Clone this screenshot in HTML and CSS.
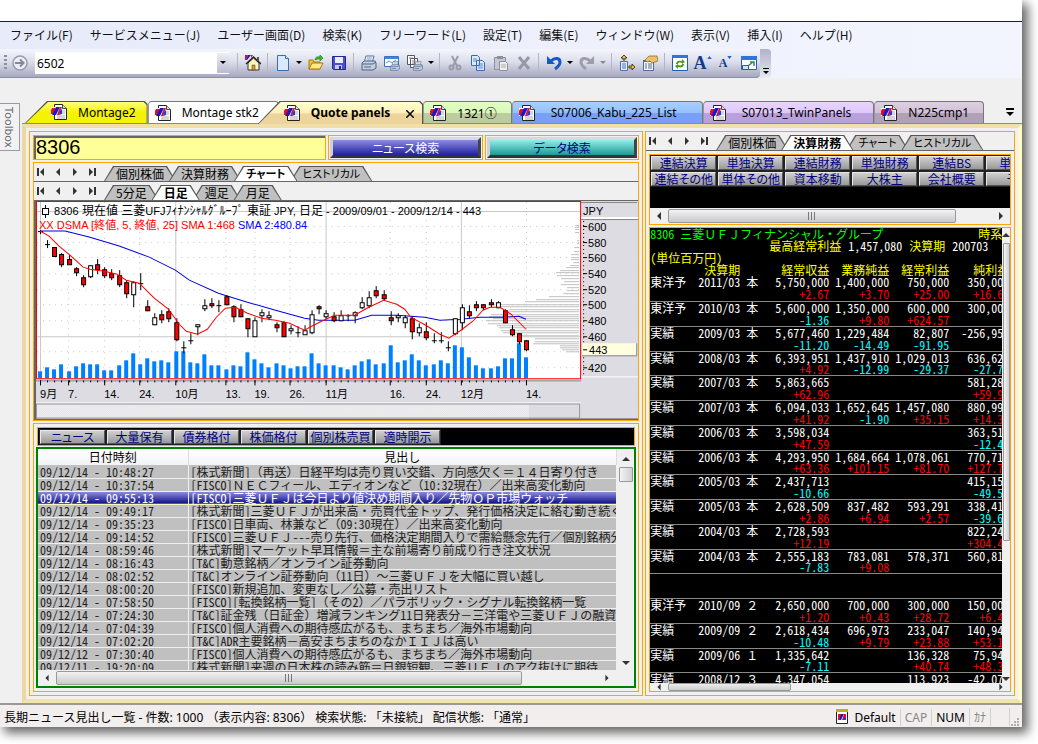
FILE: index.html
```html
<!DOCTYPE html>
<html lang="ja">
<head>
    <meta charset="UTF-8">
    <meta name="viewport" content="width=device-width, initial-scale=1.0">
    <title>Quote panels</title>
    <link rel="stylesheet" href="styles.css">
</head>
<body>
    <!-- shared icons -->
    <svg class="defs" aria-hidden="true">
        <symbol id="doc" viewBox="0 0 16 16">
            <path d="M3.5 .5h8l4 4v11h-12z" fill="#fff" stroke="#222"/>
            <path d="M11.500 .5v4h4" fill="#ddd" stroke="#444"/>
            <path d="M9 7h5M9 9h5M6 12h8M6 14h8" stroke="#aaa"/>
            <path d="M0 3h11v8H0z" fill="#fff"/>
            <path d="M1 4h4L2 10H0V6z" fill="#e01020"/>
            <path d="M5 3h4L5 11H1z" fill="#1818c8"/>
            <path d="M9 3h2L8 11H6z" fill="#e01020"/>
            <path d="M9 7l2-2v5l-3 1z" fill="#2838e0"/>
        </symbol>
        <symbol id="first" viewBox="0 0 10 10"><path d="M1 1h2v8H1zM8 1v8L4 5z" fill="#333"/></symbol>
        <symbol id="prev" viewBox="0 0 10 10"><path d="M7 1v8L3 5z" fill="#333"/></symbol>
        <symbol id="next" viewBox="0 0 10 10"><path d="M3 1v8l4-4z" fill="#333"/></symbol>
        <symbol id="last" viewBox="0 0 10 10"><path d="M7 1h2v8H7zM2 1v8l4-4z" fill="#333"/></symbol>
        <symbol id="caret" viewBox="0 0 6 4"><path d="M0 0h6L3 3z" fill="currentColor"/></symbol>
        <symbol id="printer" viewBox="0 0 16 16">
            <path d="M5 1h8l-2 7H3z" fill="#fff" stroke="#556c94"/>
            <path d="M6 3h5M5.500 5h5" stroke="#7a90b8"/>
            <path d="M1 8l2-2h11l1 2v5l-3 2H1z" fill="#c4cfe0" stroke="#4d6389"/>
            <path d="M1 9h11l3-2M3 12h7" stroke="#4d6389" fill="none"/>
        </symbol>
    </svg>

    <div class="window">
        <nav class="menu">
            <a href="#">ファイル(F)</a>
            <a href="#">サービスメニュー(J)</a>
            <a href="#">ユーザー画面(D)</a>
            <a href="#">検索(K)</a>
            <a href="#">フリーワード(L)</a>
            <a href="#">設定(T)</a>
            <a href="#">編集(E)</a>
            <a href="#">ウィンドウ(W)</a>
            <a href="#">表示(V)</a>
            <a href="#">挿入(I)</a>
            <a href="#">ヘルプ(H)</a>
        </nav>

        <div class="toolbar-row">
            <div class="toolbar">
                <span class="grip"></span>
                <button class="go" aria-label="移動"><svg width="16" height="16" viewBox="0 0 16 16"><circle cx="8" cy="8" r="7" fill="#eceef6" stroke="#9a9cae" stroke-width="1.500"/><path d="M3 8h8M8 4.500L11.500 8 8 11.500" fill="none" stroke="#85879a" stroke-width="2"/></svg></button>
                <div class="combo">
                    <input type="text" value="6502" aria-label="コード">
                    <button aria-label="一覧"><svg width="6" height="4"><use href="#caret"/></svg></button>
                </div>
                <span class="sep"></span>
                <button class="tool" aria-label="ホーム"><svg width="16" height="16" viewBox="0 0 16 16"><path d="M3 8v7h11V8L8.500 3z" fill="#fff3c0" stroke="#333"/><path d="M1 9l7.500-7L16 9" fill="none" stroke="#222" stroke-width="1.500"/><path d="M12 2h2v4h-2z" fill="#555"/><path d="M7 10h3v5H7z" fill="#d8a018" stroke="#333" stroke-width=".5"/><path d="M0 0h3L1 5H0z" fill="#e01020"/><path d="M3 0h3L2 5H1z" fill="#1818c8"/><path d="M6 0h2L6 3z" fill="#e01020"/></svg></button>
                <span class="sep"></span>
                <button class="tool" aria-label="新規"><svg width="16" height="16" viewBox="0 0 16 16"><path d="M2.500 .5h8l3 3v12h-11z" fill="#d9e9ff" stroke="#3d6cb5"/><path d="M10.500 .5v3h3" fill="#fff" stroke="#3d6cb5"/></svg></button>
                <button class="drop" aria-label="新規一覧"><svg width="6" height="4"><use href="#caret"/></svg></button>
                <button class="tool" aria-label="開く"><svg width="16" height="16" viewBox="0 0 16 16"><path d="M1 14V5h4l1 2h6v7z" fill="#f0c040" stroke="#a97a10"/><path d="M1 14l3-6h11l-3 6z" fill="#ffe88a" stroke="#a97a10"/><path d="M7 5c0-3 3-4 5-3V0l3 3-3 3V4c-2 0-3 0-5 1z" fill="#35b835" stroke="#187818" stroke-width=".6"/></svg></button>
                <button class="tool" aria-label="保存"><svg width="16" height="16" viewBox="0 0 16 16"><path d="M1.500 1.500h13v13h-12l-1-1z" fill="#4a4fd0" stroke="#23278f"/><path d="M4 2h8v6H4z" fill="#e8eeff"/><path d="M4 10h7v4H4z" fill="#c5cbe8"/><path d="M8 11h2v3H8z" fill="#23278f"/></svg></button>
                <span class="sep"></span>
                <button class="tool" aria-label="印刷"><svg width="16" height="16"><use href="#printer"/></svg></button>
                <button class="tool" aria-label="印刷プレビュー"><svg width="16" height="16" viewBox="0 0 16 16"><path d="M.5 1.500h14v10H.5z" fill="#fff" stroke="#3c70c0"/><path d="M1 2h13v2H1z" fill="#4384df"/><path d="M2 8l3-2 3 2 4-3" fill="none" stroke="#6990c4"/><use href="#printer" x="6" y="6" width="10" height="10"/></svg></button>
                <button class="tool" aria-label="まとめて印刷"><svg width="16" height="16" viewBox="0 0 16 16"><path d="M.5 .5h7v9h-7zM3.500 3.500h7v9h-7z" fill="#fff" stroke="#556"/><path d="M2 3h4M5 6h4M5 8h4" stroke="#888"/><use href="#printer" x="6" y="6" width="10" height="10"/></svg></button>
                <button class="drop" aria-label="印刷一覧"><svg width="6" height="4"><use href="#caret"/></svg></button>
                <span class="sep"></span>
                <button class="tool" aria-label="切り取り" disabled><svg width="16" height="16" viewBox="0 0 16 16" fill="none" stroke="#9a9caa" stroke-width="2"><path d="M5 1l5 10M11 1L6 11"/><circle cx="4.500" cy="12.500" r="2"/><circle cx="11.500" cy="12.500" r="2"/></svg></button>
                <button class="tool" aria-label="コピー"><svg width="16" height="16" viewBox="0 0 16 16"><path d="M1.500 .5h6l2 2v8h-8zM6.500 5.500h6l2 2v8h-8z" fill="#dceaff" stroke="#3a69b8"/><path d="M3 4h4M3 6h3M8 9h5M8 11h5M8 13h5" stroke="#5d8ad0"/></svg></button>
                <button class="tool" aria-label="貼り付け" disabled><svg width="16" height="16" viewBox="0 0 16 16"><path d="M1.500 2.500h11v12h-11z" fill="#c4c6d0" stroke="#8e90a0"/><path d="M4 1h6v3H4z" fill="#8e90a0"/><path d="M6.500 6.500h6l2 2v7h-8z" fill="#eee" stroke="#8e90a0"/><path d="M8 10h5M8 12h5" stroke="#aaa"/></svg></button>
                <button class="tool" aria-label="削除" disabled><svg width="16" height="16" viewBox="0 0 16 16"><path d="M3 2l10 12M13 2L3 14" stroke="#9698a8" stroke-width="3"/></svg></button>
                <span class="sep"></span>
                <button class="tool" aria-label="元に戻す"><svg width="16" height="16" viewBox="0 0 16 16"><path d="M1 1v8h8z" fill="#1857c8"/><path d="M5 6c4-4 9-3 9 1 0 3-2 5-5 7" fill="none" stroke="#1857c8" stroke-width="3"/></svg></button>
                <button class="drop" aria-label="元に戻す一覧"><svg width="6" height="4"><use href="#caret"/></svg></button>
                <button class="tool" aria-label="やり直し" disabled><svg width="16" height="16" viewBox="0 0 16 16"><path d="M15 1v8H7z" fill="#9c9eac"/><path d="M11 6C7 2 2 3 2 7c0 3 2 5 5 7" fill="none" stroke="#9c9eac" stroke-width="3"/></svg></button>
                <button class="drop" aria-label="やり直し一覧" disabled><svg width="6" height="4"><use href="#caret"/></svg></button>
                <span class="sep"></span>
                <button class="tool" aria-label="並べ替え"><svg width="16" height="16" viewBox="0 0 16 16"><path d="M1.500 6.500h7v9h-7z" fill="#e8f0ff" stroke="#4a6fb0"/><path d="M3 9h4M3 11h4M3 13h4" stroke="#4a6fb0"/><path d="M5 0l3 3H6v2H4V3H2zM16 12l-3-3v2h-3v2h3v2z" fill="#f4c020" stroke="#222" stroke-width=".8"/></svg></button>
                <button class="tool" aria-label="プロパティ"><svg width="16" height="16" viewBox="0 0 16 16"><path d="M1.500 5.500h10v10h-10z" fill="#f5f8ff" stroke="#506b98"/><path d="M1 5h11v2H1z" fill="#506b98"/><path d="M3 9h2M6 9h4M3 11h2M6 11h4M3 13h2M6 13h4" stroke="#506b98"/><path d="M3 5l4-4 8 0 1 5-6 2-2-2-3 1z" fill="#eac170" stroke="#8b6418" stroke-width=".7"/></svg></button>
                <span class="sep"></span>
                <button class="tool" aria-label="更新"><svg width="16" height="16" viewBox="0 0 16 16"><path d="M.5 .5h15v15H.5z" fill="#fff" stroke="#1c60b8"/><path d="M0 0h16v3H0z" fill="#2b76d8"/><path d="M4 9c0-3 3-4 6-3V4l3 3-3 2V8c-3-1-4 0-4 1zM12 9c0 3-3 4-6 3v2l-3-3 3-2v1c3 1 4 0 4-1z" fill="#4b9a20"/></svg></button>
                <button class="tool letter big" aria-label="文字を拡大">A<svg width="5" height="3" viewBox="0 0 6 4"><path d="M0 4l3-4 3 4z" fill="#1c66d8"/></svg></button>
                <button class="tool letter small" aria-label="文字を縮小">A<svg width="5" height="3" viewBox="0 0 6 4"><path d="M0 0h6L3 4z" fill="#1c66d8"/></svg></button>
                <button class="tool" aria-label="全画面"><svg width="16" height="16" viewBox="0 0 16 16"><path d="M.5 1.500h15v13H.5z" fill="#fff" stroke="#1c60b8"/><path d="M0 1h16v4H0z" fill="#2b76d8"/><path d="M1.500 10.500h6v4h-6z" fill="#cfe3ff" stroke="#1c60b8"/><path d="M7 11l5-4M9 7h4v4" fill="none" stroke="#289058" stroke-width="1.500"/></svg></button>
            </div>
            <button class="overflow" aria-label="その他"><svg width="6" height="7" viewBox="0 0 6 7"><path d="M0 0h6v1H0zM0 3h6L3 6z" fill="#000"/></svg></button>
        </div>

        <div class="work">
            <aside class="side"><button class="toolbox">Toolbox</button></aside>

            <main class="docs">
                <div class="doc-tabs">
                    <button class="doc-tab slant yellow"><svg width="16" height="16"><use href="#doc"/></svg><span>Montage2</span></button>
                    <button class="doc-tab white"><svg width="16" height="16"><use href="#doc"/></svg><span>Montage stk2</span></button>
                    <button class="doc-tab slant active"><svg width="16" height="16"><use href="#doc"/></svg><span>Quote panels</span><svg class="close" width="8" height="8" viewBox="0 0 8 8"><path d="M0 0l8 8M8 0L0 8" stroke="#000" stroke-width="1.500"/></svg></button>
                    <button class="doc-tab green"><svg width="16" height="16"><use href="#doc"/></svg><span>1321①</span></button>
                    <button class="doc-tab blue"><svg width="16" height="16"><use href="#doc"/></svg><span>S07006_Kabu_225_List</span></button>
                    <button class="doc-tab violet"><svg width="16" height="16"><use href="#doc"/></svg><span>S07013_TwinPanels</span></button>
                    <button class="doc-tab mauve"><svg width="16" height="16"><use href="#doc"/></svg><span>N225cmp1</span></button>
                    <button class="more" aria-label="タブ一覧"><svg width="8" height="8" viewBox="0 0 8 8"><path d="M0 0h8v2H0zM0 4h8L4 8z" fill="#000"/></svg></button>
                </div>

                <div class="frame">
                    <section class="pane left">
                        <div class="search">
                            <input class="code" type="text" value="8306" aria-label="銘柄コード">
                            <div class="search-cell"><button class="bevel news-search">ニュース検索</button></div>
                            <div class="search-cell"><button class="bevel data-search">データ検索</button></div>
                        </div>

                        <div class="box">
                            <div class="sheet-row">
                                <div class="pager">
                                    <button aria-label="先頭"><svg width="10" height="10"><use href="#first"/></svg></button>
                                    <button aria-label="前へ"><svg width="10" height="10"><use href="#prev"/></svg></button>
                                    <button aria-label="次へ"><svg width="10" height="10"><use href="#next"/></svg></button>
                                    <button aria-label="末尾"><svg width="10" height="10"><use href="#last"/></svg></button>
                                </div>
                                <button class="sheet">個別株価</button>
                                <button class="sheet">決算財務</button>
                                <button class="sheet kana on">チャート</button>
                                <button class="sheet kana">ヒストリカル</button>
                            </div>
                            <div class="sheet-row">
                                <div class="pager">
                                    <button aria-label="先頭"><svg width="10" height="10"><use href="#first"/></svg></button>
                                    <button aria-label="前へ"><svg width="10" height="10"><use href="#prev"/></svg></button>
                                    <button aria-label="次へ"><svg width="10" height="10"><use href="#next"/></svg></button>
                                    <button aria-label="末尾"><svg width="10" height="10"><use href="#last"/></svg></button>
                                </div>
                                <button class="sheet">5分足</button>
                                <button class="sheet on">日足</button>
                                <button class="sheet">週足</button>
                                <button class="sheet">月足</button>
                            </div>
                            <svg class="chart" id="chart" viewBox="35 201 603 219"></svg>
                        </div>

                        <div class="box news">
                            <div class="keys">
                                <button class="key">ニュース</button>
                                <button class="key">大量保有</button>
                                <button class="key">債券格付</button>
                                <button class="key">株価格付</button>
                                <button class="key">個別株売買</button>
                                <button class="key">適時開示</button>
                            </div>
                            <div class="list">
                                <div class="list-body">
                                    <div class="list-clip">
                                        <table>
                                            <colgroup><col class="when"><col></colgroup>
                                            <thead><tr><th>日付時刻</th><th>見出し</th></tr></thead>
                                            <tbody id="headlines"></tbody>
                                        </table>
                                    </div>
                                    <div class="vscroll"><span class="arrow up"></span><span class="thumb"></span><span class="arrow down"></span></div>
                                </div>
                                <div class="hscroll"><svg width="10" height="8" viewBox="0 0 10 10"><use href="#prev"/></svg><div class="track"><span class="thumb"></span></div><svg width="10" height="8" viewBox="0 0 10 10"><use href="#next"/></svg></div>
                            </div>
                        </div>
                    </section>

                    <section class="pane right">
                        <div class="sheet-row">
                            <div class="pager">
                                <button aria-label="先頭"><svg width="10" height="10"><use href="#first"/></svg></button>
                                <button aria-label="前へ"><svg width="10" height="10"><use href="#prev"/></svg></button>
                                <button aria-label="次へ"><svg width="10" height="10"><use href="#next"/></svg></button>
                                <button aria-label="末尾"><svg width="10" height="10"><use href="#last"/></svg></button>
                            </div>
                            <button class="sheet">個別株価</button>
                            <button class="sheet on">決算財務</button>
                            <button class="sheet kana">チャート</button>
                            <button class="sheet kana">ヒストリカル</button>
                        </div>
                        <div class="box reports">
                            <div class="key-grid">
                                <button class="key">連結決算</button>
                                <button class="key">単独決算</button>
                                <button class="key">連結財務</button>
                                <button class="key">単独財務</button>
                                <button class="key">連結BS</button>
                                <button class="key">単独BS</button>
                                <button class="key">連結その他</button>
                                <button class="key">単体その他</button>
                                <button class="key">資本移動</button>
                                <button class="key">大株主</button>
                                <button class="key">会社概要</button>
                                <button class="key">予想</button>
                            </div>
                            <div class="hscroll"><svg width="10" height="10"><use href="#prev"/></svg><div class="track"><span class="thumb"></span></div><svg width="10" height="10"><use href="#next"/></svg></div>
                        </div>
                        <div class="box finance">
                            <div class="finance-body">
                                <div class="finance-clip">
                                    <div class="line name"><span>8306 三菱<span class="full">ＵＦＪ</span>フィナンシャル・グループ</span><em>時系列</em></div>
                                    <div class="line record"><em>最高経常利益</em><span>1,457,080</span><em>決算期</em><span>200703</span></div>
                                    <div class="line"><em>(単位百万円)</em></div>
                                    <table>
                                        <colgroup><col class="kind"><col class="term"><col class="mark"><col class="first-value"><col class="value"><col class="value"><col class="value"></colgroup>
                                        <thead><tr><th></th><th>決算期</th><th></th><th>経常収益</th><th>業務純益</th><th>経常利益</th><th>純利益</th></tr></thead>
                                        <tbody id="results"></tbody>
                                    </table>
                                </div>
                                <div class="vscroll"><span class="arrow up"></span><span class="thumb"></span><span class="arrow down"></span></div>
                            </div>
                            <div class="hscroll"><svg width="10" height="8" viewBox="0 0 10 10"><use href="#prev"/></svg><div class="track"><span class="thumb"></span></div><svg width="10" height="8" viewBox="0 0 10 10"><use href="#next"/></svg></div>
                        </div>
                    </section>
                </div>
            </main>
        </div>

        <footer class="status">
            <span class="message">長期ニュース見出し一覧 - 件数: 1000 （表示内容: 8306） 検索状態: 「未接続」 配信状態: 「通常」</span>
            <span class="profile"><svg width="14" height="16" viewBox="0 0 14 16"><path d="M1.500 1.500h11v13h-11z" fill="#fff" stroke="#222"/><path d="M1 0h12v3H1z" fill="#b8b020"/><path d="M3 5h4l-3 6H3z" fill="#e01020"/><path d="M6 5h3l-3 6H4z" fill="#1818c8"/><path d="M9 5h2v6H7z" fill="#e01020"/><path d="M9 8h2v3H8z" fill="#2838e0"/></svg>Default</span>
            <span class="cell off">CAP</span>
            <span class="cell">NUM</span>
            <span class="cell off">ｶﾅ</span>
            <span class="cell blank"></span>
            <svg class="resize" width="10" height="10" viewBox="0 0 10 10"><path d="M7 1h2v2H7zM7 4h2v2H7zM4 4h2v2H4zM7 7h2v2H7zM4 7h2v2H4zM1 7h2v2H1z" fill="#b0aeb0"/></svg>
        </footer>
    </div>
    <script src="app.js"></script>
</body>
</html>
```
FILE: styles.css
```css
* {
    box-sizing: border-box;
}
body {
    margin: 0;
    padding: 0 16px 17px 0;
    height: 100vh;
    background: #fff;
    font-family: "Noto Sans", "Noto Sans CJK JP", sans-serif;
    font-size: 12px;
    color: #000;
    overflow: hidden;
}
button, input {
    font: inherit;
    color: inherit;
    margin: 0;
    padding: 0;
    border: 0;
    background: none;
}
svg {
    display: block;
    flex: none;
}
.defs {
    display: none;
}
.window {
    display: flex;
    flex-direction: column;
    height: 100%;
    border-top: 21px solid #fff;
    background: #f0f0f0;
    box-shadow: 5px 5px 10px 1px rgba(0, 0, 0, 0.6);
}

/* menu and toolbar */
.menu {
    display: flex;
    gap: 17px;
    height: 28px;
    padding: 0 0 2px 10px;
    align-items: center;
    border-top: 1px solid #1c2233;
    background: linear-gradient(90deg, #e7ebfa, #f3f5fe);
    font-family: "Noto Sans CJK JP", sans-serif;
}
.menu a {
    color: #111;
    text-decoration: none;
    white-space: nowrap;
}
.toolbar-row {
    display: flex;
    height: 29px;
    background: linear-gradient(90deg, #e7ebfa, #f3f5fe);
}
.toolbar {
    display: flex;
    align-items: center;
    padding-left: 4px;
    border-bottom: 1px solid #8d8fa5;
    border-radius: 0 0 4px 0;
    background: linear-gradient(#f4f6fc, #dcdfeb 45%, #a6a8c0);
}
.grip {
    width: 3px;
    height: 16px;
    margin-right: 5px;
    background: repeating-linear-gradient(#8c8ea4 0 2px, transparent 2px 4px);
}
.go {
    width: 18px;
    margin-right: 5px;
}
.combo {
    display: flex;
    width: 194px;
    height: 22px;
    margin-right: 5px;
    background: #fff;
}
.combo input {
    flex: 1;
    min-width: 0;
    padding-left: 2px;
}
.combo button {
    display: grid;
    place-items: center;
    width: 12px;
    margin: 1px 0 1px;
    background: linear-gradient(#eceef6, #b9bbce);
}
.sep {
    width: 1px;
    height: 20px;
    margin: 0 3px;
    background: #b4b6c6;
}
.tool {
    display: grid;
    place-items: center;
    width: 23px;
    height: 24px;
}
.drop {
    display: grid;
    place-items: center;
    width: 10px;
    height: 24px;
}
.drop:disabled {
    color: #888;
}
.letter {
    display: flex;
    align-items: center;
    justify-content: center;
    font-family: "Liberation Serif", serif;
    font-weight: bold;
    color: #143a8c;
}
.letter svg {
    align-self: flex-start;
    margin-top: 5px;
}
.big {
    font-size: 18px;
}
.small {
    font-size: 12px;
}
.overflow {
    display: flex;
    align-items: flex-end;
    justify-content: center;
    width: 11px;
    padding-bottom: 3px;
    border-radius: 0 4px 4px 0;
    background: linear-gradient(#b0b2c8, #e6e8f2);
}

/* work area */
.work {
    display: flex;
    flex: 1;
    min-height: 0;
}
.side {
    width: 22px;
    padding-top: 25px;
}
.toolbox {
    width: 20px;
    height: 48px;
    border: 1px solid #9a9aa2;
    border-left: 0;
    background: #f2f2f4;
    color: #666;
    font-size: 11px;
    writing-mode: vertical-rl;
}
.docs {
    display: flex;
    flex-direction: column;
    flex: 1;
    min-width: 0;
    padding-top: 23px;
}
.doc-tabs {
    display: flex;
    height: 23px;
    padding-left: 3px;
    border-bottom: 1px solid #8a8a8a;
}
.doc-tab {
    position: relative;
    z-index: 0;
    display: flex;
    align-items: center;
    height: 22px;
    padding: 0 18px 0 6px;
    border: 1px solid #777;
    border-bottom: 0;
    border-left-color: #999;
    border-radius: 4px 4px 0 0;
    white-space: nowrap;
}
.doc-tab span {
    margin-left: 11px;
}
.slant {
    border: 0;
    padding: 0 12px 0 26px;
}
.slant::before,
.slant::after {
    content: "";
    position: absolute;
    z-index: -1;
    inset: 0;
    background: #555;
    clip-path: polygon(22px 0, calc(100% - 3px) 0, 100% 3px, 100% 100%, 0 100%);
}
.slant::after {
    inset: 1px 1px 0 1px;
}
.yellow::after {
    background: linear-gradient(#ffff80, #f4f400 50%);
}
.white {
    width: 131px;
    background: #fff;
}
.active {
    z-index: 1;
    height: 23px;
    margin-left: -21px;
    padding-right: 9px;
    font-weight: bold;
}
.active::after {
    background: linear-gradient(#ffffd0, #fff0b8 48%, #ecd49c 55%);
}
.close {
    margin-left: 16px;
    margin-top: 3px;
}
.green {
    background: linear-gradient(#e2ffc4, #daf8b8 50%, #bccc9c 55%);
    padding-right: 14px;
}
.blue {
    background: linear-gradient(#a8d0ff, #94c2ff 50%, #78a0fa 55%);
    padding-right: 25px;
}
.violet {
    background: linear-gradient(#e8d4ff, #e0c8fc 50%, #b8a0dc 55%);
    padding-right: 22px;
}
.mauve {
    background: linear-gradient(#dcd0e0, #d4c0d8 50%, #b0a0b8 55%);
    padding-right: 14px;
}
.blue span,
.violet span {
    margin-left: 16px;
}
.more {
    display: grid;
    place-items: center;
    width: 24px;
    margin-left: auto;
}
.frame {
    display: grid;
    grid-template-columns: 613fr 369fr;
    gap: 2px;
    flex: 1;
    min-height: 0;
    padding: 3px;
    border: 4px solid #f3e3ac;
    border-top-color: #f0dfab;
    border-left-color: #ecd8a2;
    border-right-color: #fffcc8;
    background: #f0f0f0;
}
.pane {
    display: flex;
    flex-direction: column;
    gap: 2px;
    min-width: 0;
    min-height: 0;
    border: 1px solid #ffa500;
}
.left {
    padding: 3px;
}
.box {
    border: 1px solid #ffa500;
}

/* search row */
.search {
    display: grid;
    grid-template-columns: 19fr 10fr 10fr;
    gap: 2px;
    height: 25px;
}
.code {
    min-width: 0;
    padding: 0 2px;
    border: 1px solid #ffa500;
    background: #ff9;
    box-shadow: inset 1px 1px 0 1px #666;
    font-size: 20px;
    line-height: 20px;
    font-family: "Liberation Sans", sans-serif;
}
.search-cell {
    padding: 1px;
    border: 1px solid #ffa500;
}
.bevel {
    display: block;
    width: 100%;
    height: 100%;
    border: 3px solid;
    border-color: #d8d8e0 #444 #333 #d0d0d8;
    line-height: 14px;
    font-family: "Noto Sans CJK JP", sans-serif;
    font-feature-settings: "palt";
}
.news-search {
    background: linear-gradient(#8c8ce0, #2020a0);
    color: #fff;
}
.data-search {
    background: linear-gradient(#90eee8, #209894);
    color: #000080;
}

/* sheet tabs */
.sheet-row {
    display: flex;
    align-items: flex-end;
    height: 19px;
    padding-left: 2px;
    border-bottom: 1px solid #666;
}
.pager {
    display: flex;
    align-items: center;
    height: 100%;
    width: 68px;
}
.pager button {
    width: 17px;
}
.sheet {
    position: relative;
    z-index: 0;
    height: 15px;
    padding: 0 12px;
    margin-right: -7px;
    line-height: 15px;
    white-space: nowrap;
    font-family: "Noto Sans CJK JP", sans-serif;
    font-feature-settings: "palt";
}
.sheet::before,
.sheet::after {
    content: "";
    position: absolute;
    z-index: -1;
    inset: 0;
    background: #555;
    clip-path: polygon(9px 0, calc(100% - 9px) 0, 100% 100%, 0 100%);
}
.sheet::after {
    inset: 1px 1px 0;
    background: #c0c0c0;
}
.kana {
    font-size: 11px;
}
.on {
    z-index: 1;
    font-weight: bold;
}
.on::after {
    background: #fff;
}
.chart {
    width: 100%;
    height: auto;
    font-family: "Liberation Sans", "Noto Sans CJK JP", sans-serif;
    font-size: 11px;
}
.chart .caption {
    font-size: 12px;
}
.chart .latin {
    font-size: 11px;
}

/* grey push keys */
.key {
    width: 67px;
    height: 16px;
    border: 2px solid;
    border-color: #e8e8e8 #555 #555 #e8e8e8;
    outline: 1px solid #222;
    outline-offset: -1px;
    background: linear-gradient(#d0d0d0, #999);
    color: #000080;
    line-height: 12px;
    white-space: nowrap;
    font-family: "Noto Sans CJK JP", sans-serif;
    font-feature-settings: "palt";
}
.keys {
    display: flex;
    height: 19px;
    padding: 1px;
    margin: 0 1px;
    border: 1px solid #ffa500;
    background: #000;
}

/* news list */
.news {
    display: flex;
    flex-direction: column;
    gap: 1px;
    flex: 1;
    min-height: 0;
    padding: 3px 2px;
}
.list {
    display: flex;
    flex-direction: column;
    flex: 1;
    min-height: 0;
    border: 2px solid #008000;
    background: #f0f0f0;
    font-family: "Noto Sans CJK JP", sans-serif;
    font-feature-settings: "hwid";
}
.full {
    font-feature-settings: normal;
}
.list-body {
    display: flex;
    flex: 1;
    min-height: 0;
}
.list-clip {
    flex: 1;
    min-width: 0;
    overflow: hidden;
}
.list table {
    width: 100%;
    border-collapse: collapse;
    table-layout: fixed;
}
.when {
    width: 150px;
}
.list th {
    height: 16px;
    padding: 0;
    line-height: 16px;
    font-weight: normal;
    background: linear-gradient(#fff, #f2f3f5);
    border-right: 1px solid #ddd;
}
.list td {
    height: 13px;
    padding: 0 2px;
    line-height: 12px;
    overflow: hidden;
    white-space: nowrap;
    background: #c0c0c0;
    color: #222;
    border-bottom: 1px solid #efefef;
    border-right: 1px solid #efefef;
}
.list .selected td {
    background: linear-gradient(#9090e0, #101088);
    border-top: 1px dashed #ff9;
    border-bottom: 1px dashed #ff9;
    color: #fff;
}
.vscroll {
    display: flex;
    flex-direction: column;
    align-items: center;
    width: 17px;
    padding: 5px 0;
    background: #f0f0f0;
}
.vscroll .thumb {
    width: 14px;
    height: 15px;
    margin-top: 6px;
    border: 1px solid #999;
    border-radius: 1px;
    background: linear-gradient(90deg, #f4f4f4, #d0d0d4);
}
.arrow {
    border: 4px solid transparent;
}
.arrow.up {
    border-bottom-color: #333;
    border-top: 0;
    margin-top: 3px;
}
.arrow.down {
    border-top-color: #333;
    border-bottom: 0;
    margin-top: auto;
}
.hscroll {
    display: flex;
    align-items: center;
    height: 16px;
    padding: 0 4px;
    gap: 4px;
    background: #f0f0f0;
}
.track {
    flex: 1;
    height: 14px;
}
.hscroll .thumb {
    display: block;
    width: 86%;
    height: 14px;
    border: 1px solid #999;
    border-radius: 2px;
    background:
        repeating-linear-gradient(90deg, #777 0 1px, transparent 1px 3px) center / 8px 8px no-repeat,
        linear-gradient(#f2f2f2, #cacacd);
}
.list .hscroll {
    padding-right: 22px;
}

/* right pane */
.right .box {
    margin: 0 3px;
}
.right .sheet-row {
    margin-bottom: 1px;
}
.reports {
    background: #000;
    overflow: hidden;
}
.key-grid {
    display: grid;
    grid-template-columns: repeat(6, 67px);
    height: 53px;
    align-content: start;
}
.reports .hscroll .thumb {
    width: 89%;
}
.right .finance {
    display: flex;
    flex-direction: column;
    flex: 1;
    min-height: 0;
    margin-bottom: 3px;
    color: #fff;
    background: #000;
    font-family: "Noto Sans CJK JP", sans-serif;
    font-feature-settings: "hwid";
}
.finance-body {
    display: flex;
    flex: 1;
    min-height: 0;
}
.finance-clip {
    flex: 1;
    min-width: 0;
    overflow: hidden;
}
.finance em,
.finance th {
    font-style: normal;
    color: #ff0;
}
.line {
    height: 12px;
    line-height: 11px;
    white-space: nowrap;
}
.name {
    display: flex;
    gap: 95px;
    color: #0f0;
}
.record {
    display: flex;
    gap: 7px;
    padding-left: 119px;
}
.finance table {
    width: 359px;
    border-collapse: collapse;
    table-layout: fixed;
}
.kind, .term {
    width: 48px;
}
.mark {
    width: 12px;
}
.first-value {
    width: 71px;
}
.value {
    width: 60px;
}
.finance th,
.finance td {
    padding: 0;
    line-height: 12px;
    font-weight: normal;
    text-align: right;
    vertical-align: top;
    white-space: nowrap;
}
.finance th {
    height: 12px;
}
.finance th:nth-child(2) {
    text-align: center;
}
.finance td {
    height: 25px;
    border-bottom: 1px solid #888;
}
.finance tr:nth-child(4n) td {
    height: 24px;
    line-height: 11px;
}
.finance td:nth-child(-n+3) {
    text-align: left;
}
.finance .change {
    display: block;
}
.gain {
    color: #f00;
}
.loss {
    color: #0ff;
}
.finance .vscroll {
    width: 8px;
    padding: 2px 0;
}
.finance .vscroll .thumb {
    width: 7px;
    height: 298px;
}
.finance .hscroll {
    height: 8px;
}
.finance .hscroll .thumb {
    width: 38%;
    height: 8px;
    background: linear-gradient(#eee, #ccc);
}
.finance .track {
    height: 8px;
}

/* status bar */
.status {
    display: flex;
    align-items: center;
    height: 24px;
    padding: 2px 2px 0 4px;
    border-top: 2px solid #999;
    background: #f2eeee;
    white-space: nowrap;
}
.message {
    flex: 1;
}
.profile {
    display: flex;
    gap: 5px;
    align-items: center;
    padding-right: 4px;
}
.cell {
    padding: 0 4px;
    border-left: 1px solid #d4d0d0;
}
.off {
    color: #888;
}
.blank {
    width: 20px;
    height: 18px;
    border-right: 1px solid #d4d0d0;
}
.resize {
    align-self: flex-end;
}
```
FILE: app.js
```js
// [high, low, body top, body bottom, kind] kind: r = down, w = up, x = unchanged
const candles = [
    [230, 234, 231, 231, 'x'], [240, 248, 244, 244, 'x'], [247, 256, 247, 256, 'r'], [253, 267, 254, 264, 'r'],
    [255, 264, 259, 264, 'r'], [267, 276, 268, 272, 'r'], [275, 287, 277, 284, 'r'], [265, 278, 265, 276, 'w'],
    [259, 274, 264, 269, 'r'], [267, 278, 269, 275, 'r'], [269, 280, 273, 277, 'r'], [270, 287, 275, 284, 'r'],
    [280, 298, 282, 293, 'r'], [281, 307, 282, 294, 'w'], [273, 290, 283, 283, 'x'], [300, 311, 306, 310, 'r'],
    [313, 325, 317, 324, 'w'], [310, 323, 314, 319, 'r'], [308, 322, 311, 318, 'r'], [318, 341, 322, 339, 'r'],
    [341, 353, 347, 347, 'x'], [333, 344, 340, 340, 'x'], [324, 335, 324, 326, 'w'], [299, 311, 305, 308, 'w'],
    [298, 308, 303, 305, 'r'], [300, 312, 305, 305, 'x'], [295, 305, 296, 304, 'r'], [305, 322, 306, 316, 'r'],
    [304, 317, 309, 316, 'r'], [318, 337, 318, 328, 'r'], [317, 336, 320, 336, 'w'], [309, 322, 312, 315, 'w'],
    [311, 320, 315, 317, 'w'], [322, 332, 324, 327, 'r'], [321, 336, 322, 336, 'r'], [325, 334, 328, 330, 'w'],
    [326, 337, 332, 332, 'x'], [325, 334, 330, 334, 'w'], [310, 334, 314, 332, 'w'], [305, 314, 306, 308, 'r'],
    [310, 319, 313, 316, 'w'], [312, 322, 316, 320, 'r'], [310, 321, 315, 320, 'w'], [314, 321, 315, 315, 'x'],
    [311, 323, 312, 315, 'w'], [297, 309, 302, 307, 'w'], [291, 308, 297, 305, 'w'], [286, 298, 290, 295, 'r'],
    [290, 300, 294, 298, 'r'], [311, 325, 317, 320, 'r'], [313, 322, 315, 317, 'w'], [315, 328, 317, 322, 'w'],
    [316, 339, 318, 331, 'r'], [323, 336, 327, 332, 'w'], [322, 340, 331, 337, 'r'], [333, 343, 340, 340, 'x'],
    [332, 343, 340, 340, 'x'], [341, 351, 347, 347, 'x'], [318, 335, 318, 333, 'w'], [304, 330, 307, 322, 'w'],
    [305, 318, 311, 315, 'r'], [301, 311, 304, 307, 'r'], [304, 310, 304, 307, 'r'], [299, 307, 302, 304, 'r'],
    [301, 308, 302, 307, 'w'], [309, 323, 310, 322, 'r'], [325, 336, 329, 334, 'r'], [333, 344, 333, 341, 'r'],
    [340, 351, 340, 349, 'r']
];
const volumes = [
    7, 11, 9, 14, 7, 12, 15, 14, 14, 8, 8, 13, 18, 25, 14, 20, 17, 18, 16, 27, 27, 16, 15, 24, 13, 13, 9, 13, 12, 26,
    19, 15, 11, 15, 13, 10, 12, 12, 25, 15, 13, 13, 11, 9, 13, 17, 19, 14, 15, 33, 16, 18, 24, 18, 13, 14, 18, 15,
    33, 31, 21, 13, 10, 10, 12, 20, 20, 35, 21
];
const sma5 = '41,231 50,236 60,246 72,256 84,267 91,269 105,271 118,274 127,280 140,283 155,298 169,309 180,324 187,331 198,334 208,329 217,317 226,308 236,307 248,313 262,318 276,320 290,323 305,330 312,326 322,321 335,315 355,315 369,307 384,300 397,304 405,309 411,317 426,325 440,334 449,338 461,330 473,321 483,310 490,307 500,307 511,314 526,329';
const sma25 = '41,231 66,231 90,237 120,246 150,257 176,270 190,280 219,293 248,302 276,310 305,318 319,320 355,320 372,315 397,315 411,316 425,317 440,320 461,319 480,317 505,317 519,316 526,319';
// price band volumes, [y, length]
const bands = [
    [225, 4], [227, 4], [229, 4], [232, 4], [240, 2], [243, 2], [247, 5], [251, 5], [254, 8], [257, 8], [259, 8],
    [262, 6], [265, 9], [267, 13], [270, 19], [272, 23], [275, 22], [278, 18], [281, 15], [284, 18], [287, 12],
    [290, 12], [293, 16], [296, 30], [299, 43], [301, 54], [304, 80], [306, 78], [309, 70], [311, 74], [314, 88],
    [316, 90], [318, 86], [320, 93], [323, 91], [325, 82], [327, 80], [330, 78], [332, 76], [335, 62], [338, 44],
    [341, 44], [343, 46], [345, 19], [347, 19], [349, 17], [351, 12]
];
const months = [[41, '9月'], [176, '10月'], [326, '11月'], [461, '12月']];
const days = [[69, '7.'], [105, '14.'], [140, '24.'], [226, '13.'], [255, '19.'], [290, '26.'], [390, '16.'], [426, '24.'], [526, '14.']];
const prices = [[226, 600], [242, 580], [257, 560], [273, 540], [289, 520], [304, 500], [320, 480], [336, 460], [367, 420]];

function rect(x, y, w, h, fill, extra) {
    return `<rect x="${x}" y="${y}" width="${w}" height="${h}" fill="${fill}" ${extra || ''}/>`;
}

function candleX(i) {
    return 41 + Math.round(i * 7.137);
}

function drawChart() {
    let out = '<defs><pattern id="dots" width="2" height="2" patternUnits="userSpaceOnUse"><rect width="2" height="2" fill="#fff"/><path d="M0 0h1v1H0zM1 1h1v1H1z" fill="#d6d6dc"/></pattern></defs>';
    out += rect(35, 201, 603, 219, '#dddce2') + rect(35, 201, 2, 219, '#666') + rect(35, 418, 603, 2, '#666');
    out += rect(38, 202, 542, 177, '#fff');

    // grid
    prices.concat([[351, 440]]).forEach(([y]) => {
        out += y === 336
            ? rect(38, y, 542, 1, '#c8c8c8')
            : `<path d="M38 ${y}.5H580" stroke="#c8c8c8" stroke-dasharray="1 5"/>`;
    });
    out += rect(38, 211, 542, 1, '#c8c8c8');
    months.forEach(([x]) => { out += rect(x, 202, 1, 176, '#c8c8c8'); });
    days.forEach(([x]) => { out += `<path d="M${x}.5 202V378" stroke="#c8c8c8" stroke-dasharray="1 5"/>`; });
    bands.forEach(([y, w]) => { out += rect(579 - w, y, w, 1, '#c0c0c0'); });

    volumes.forEach((v, i) => { out += rect(candleX(i) - 2, 378 - v, 4, v, '#0080ff'); });
    out += `<polyline points="${sma25}" fill="none" stroke="#0000e8"/>`;
    candles.forEach(([high, low, top, bottom, kind], i) => {
        const x = candleX(i);
        out += rect(x, high, 1, low - high, '#000');
        if (kind === 'x') {
            out += rect(x - 2, top, 5, 1, '#000');
        } else {
            out += `<path d="M${x - 2}.5 ${top}.5h4v${bottom - top}h-4z" fill="${kind === 'r' ? '#f00' : '#fff'}" stroke="#000"/>`;
        }
    });
    out += `<polyline points="${sma5}" fill="none" stroke="#f00"/>`;
    out += '<path d="M37.5 201.5H580.5V378.5H37.5z" fill="none" stroke="#f00"/>';

    // captions
    out += '<path d="M43.500 208.500h6v6h-6zM46.500 205v4M46.500 215v3" fill="#fff" stroke="#000"/>';
    out += '<text class="caption" x="55" y="215"><tspan class="latin">8306</tspan> 現在値 三菱<tspan class="latin">UFJ</tspan>ﾌｨﾅﾝｼｬﾙｸﾞﾙｰﾌﾟ 東証<tspan class="latin"> JPY, </tspan>日足<tspan class="latin"> - 2009/09/01 - 2009/12/14 - 443</tspan></text>';
    out += '<text x="40" y="229" fill="#f00">XX DSMA [終値, 5, 終値, 25] SMA 1:468 <tspan fill="#00f">SMA 2:480.84</tspan></text>';

    // time axis
    out += rect(37, 380, 544, 1, '#888');
    candles.forEach((c, i) => { out += rect(candleX(i), 380, 1, 2, '#000'); });
    months.concat(days).forEach(([x, label]) => {
        out += rect(x, 380, 1, 5, '#000') + `<text x="${x}" y="398">${label}</text>`;
    });
    out += rect(37, 402, 544, 1, '#fff') + rect(38, 404, 491, 14, 'url(#dots)');
    out += '<path d="M37.5 403.5H579.5V417.5H37.5z" fill="none" stroke="#999"/>';

    // price axis
    out += rect(581, 202, 56, 1, '#888') + rect(581, 217, 57, 2, '#fff') + rect(581, 219, 57, 1, '#888');
    out += rect(581, 376, 57, 1, '#fff') + '<text x="583" y="215">JPY</text>';
    out += '<path d="M583.5 221V376" stroke="#000" stroke-dasharray="1 3"/>';
    prices.forEach(([y, label]) => {
        out += rect(583, y, 4, 1, '#000') + `<text x="588" y="${y + 5}">${label}</text>`;
    });
    out += rect(582, 343, 54, 12, '#ffffe0') + rect(582, 355, 55, 1, '#888') + rect(636, 343, 1, 12, '#888');
    out += rect(583, 349, 4, 1, '#000') + '<text x="589" y="354">443</text>';
    document.getElementById('chart').innerHTML = out;
}

const headlines = [
    ['09/12/14 - 10:48:27', '[株式新聞]（再送）日経平均は売り買い交錯、方向感欠く＝１４日寄り付き'],
    ['09/12/14 - 10:37:54', '[FISCO]ＮＥＣフィール、エディオンなど（10:32現在）／出来高変化動向'],
    ['09/12/14 - 09:55:13', '[FISCO]三菱ＵＦＪは今日より値決め期間入り／先物ＯＰ市場ウォッチ'],
    ['09/12/14 - 09:49:17', '[株式新聞]三菱ＵＦＪが出来高・売買代金トップ、発行価格決定に絡む動き続く'],
    ['09/12/14 - 09:35:23', '[FISCO]日車両、林兼など（09:30現在）／出来高変化動向'],
    ['09/12/14 - 09:14:52', '[FISCO]三菱ＵＦＪ---売り先行、価格決定期間入りで需給懸念先行／個別銘柄分析'],
    ['09/12/14 - 08:59:46', '[株式新聞]マーケット早耳情報＝主な前場寄り前成り行き注文状況'],
    ['09/12/14 - 08:16:43', '[T&C]動意銘柄／オンライン証券動向'],
    ['09/12/14 - 08:02:52', '[T&C]オンライン証券動向（11日）～三菱ＵＦＪを大幅に買い越し'],
    ['09/12/14 - 08:00:20', '[FISCO]新規追加、変更なし／公募・売出リスト'],
    ['09/12/14 - 07:58:50', '[FISCO][転換銘柄一覧]（その2）／パラボリック・シグナル転換銘柄一覧'],
    ['09/12/14 - 07:24:30', '[T&C]証金残（日証金）増減ランキング11日発表分－三洋電や三菱ＵＦＪの融資'],
    ['09/12/14 - 07:04:39', '[FISCO]個人消費への期待感広がるも、まちまち／海外市場動向'],
    ['09/12/14 - 07:02:20', '[T&C]ADR主要銘柄－高安まちまちのなかＩＩＪは高い'],
    ['09/12/12 - 07:30:40', '[FISCO]個人消費への期待感広がるも、まちまち／海外市場動向'],
    ['09/12/11 - 19:20:09', '[株式新聞]来週の日本株の読み筋＝日銀短観、三菱ＵＦＪのアク抜けに期待']
];
const selected = 2;

// full-width forms must keep their two cells in the half-width lists
function full(text) {
    return text.replace(/&/g, '&amp;').replace(/[\uff01-\uff5e]+/g, '<span class="full">$&</span>');
}

function fillHeadlines() {
    document.getElementById('headlines').innerHTML = headlines.map(([when, title], i) =>
        `<tr${i === selected ? ' class="selected"' : ''}><td>${when}</td><td>${full(title)}</td></tr>`).join('');
}

const results = [
    ['東洋予', '2011/03', '本', '5,750,000|+2.67', '1,400,000|+3.70', '750,000|+25.00', '350,000|+16.67'],
    ['東洋予', '2010/03', '本', '5,600,000|-1.36', '1,350,000|+9.80', '600,000|+624.57', '300,000|'],
    ['実績', '2009/03', '本', '5,677,460|-11.20', '1,229,484|-14.49', '82,807|-91.95', '-256,952|'],
    ['実績', '2008/03', '本', '6,393,951|+4.92', '1,437,910|-12.99', '1,029,013|-29.37', '636,624|-27.74'],
    ['実績', '2007/03', '本', '5,863,665|+62.96', '', '', '581,288|+59.91'],
    ['実績', '2007/03', '本', '6,094,033|+41.92', '1,652,645|-1.90', '1,457,080|+35.15', '880,997|+14.31'],
    ['実績', '2006/03', '本', '3,598,034|+47.59', '', '', '363,511|-12.44'],
    ['実績', '2006/03', '本', '4,293,950|+63.36', '1,684,664|+101.15', '1,078,061|+81.70', '770,719|+127.74'],
    ['実績', '2005/03', '本', '2,437,713|-10.66', '', '', '415,155|-49.51'],
    ['実績', '2005/03', '本', '2,628,509|+2.86', '837,482|+6.94', '593,291|+2.57', '338,415|-39.66'],
    ['実績', '2004/03', '本', '2,728,593|+12.19', '', '', '822,244|+304.42'],
    ['実績', '2004/03', '本', '2,555,183|-7.83', '783,081|+9.08', '578,371|', '560,815|'],
    ['', '', '', '', '', '', ''],
    ['東洋予', '2010/09', '２', '2,650,000|+1.20', '700,000|+0.43', '300,000|+28.72', '150,000|+6.43'],
    ['実績', '2009/09', '２', '2,618,434|-10.48', '696,973|+9.79', '233,047|+23.88', '140,942|+53.18'],
    ['実績', '2009/06', '１', '1,335,642|-7.11', '', '136,328|+40.74', '75,943|+48.31'],
    ['実績', '2008/12', '３', '4,347,054|', '', '113,923|', '-42,071|']
];

function fillResults() {
    document.getElementById('results').innerHTML = results.map(row => '<tr>' + row.map(cell => {
        const [value, change] = cell.split('|');
        const kind = change && change[0] === '-' ? 'loss' : 'gain';
        return `<td>${full(value)}${change ? `<span class="change ${kind}">${change}</span>` : ''}</td>`;
    }).join('') + '</tr>').join('');
}

drawChart();
fillHeadlines();
fillResults();
```
